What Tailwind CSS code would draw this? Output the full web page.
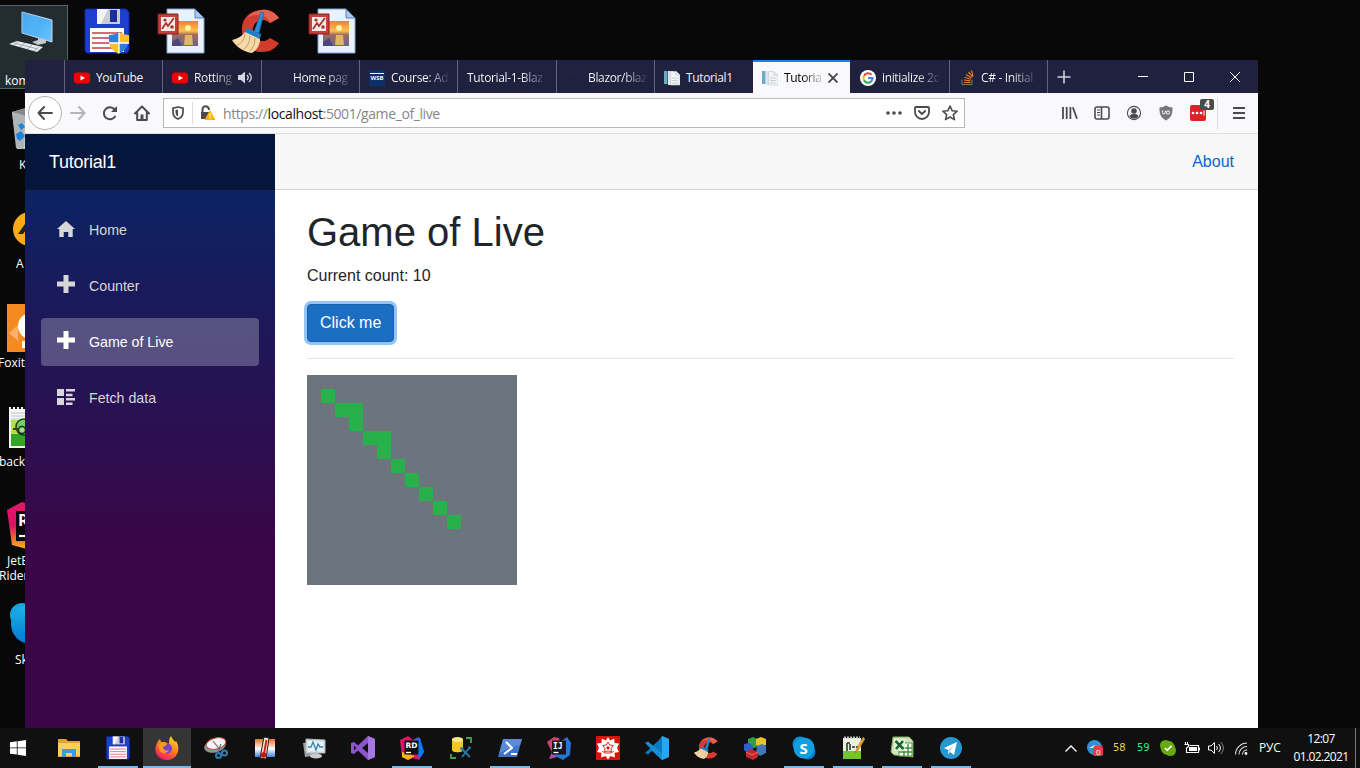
<!DOCTYPE html>
<html lang="en">
<head>
<meta charset="utf-8">
<title>Game of Live</title>
<script src="https://cdn.jsdelivr.net/npm/@tailwindcss/browser@4"></script>
</head>
<body class="relative h-[768px] w-[1360px] overflow-hidden bg-[#080808] font-['Open_Sans','Noto_Sans',sans-serif] text-xs">

<svg class="absolute h-0 w-0">
  <defs>
    <linearGradient id="scr" x1="0" y1="0" x2="1" y2="1"><stop offset="0" stop-color="#2f9df0"/><stop offset="1" stop-color="#6cc4fb"/></linearGradient>
    <linearGradient id="sun" x1="0" y1="0" x2="0" y2="1"><stop offset="0" stop-color="#e8803c"/><stop offset=".4" stop-color="#ffc24f"/><stop offset=".55" stop-color="#a06a60"/><stop offset="1" stop-color="#6a6590"/></linearGradient>
    <linearGradient id="rd" x1="0" y1="0" x2="0" y2="1"><stop offset="0" stop-color="#e0186c"/><stop offset=".5" stop-color="#dd1265"/><stop offset="1" stop-color="#fdb60d"/></linearGradient>
    <linearGradient id="ff" x1=".8" y1="0" x2=".3" y2="1"><stop offset="0" stop-color="#ffe226"/><stop offset=".45" stop-color="#ff8a16"/><stop offset="1" stop-color="#f5156c"/></linearGradient>
    <linearGradient id="sk" x1="0" y1="0" x2="0" y2="1"><stop offset="0" stop-color="#1fb5ea"/><stop offset="1" stop-color="#0078d4"/></linearGradient>
    <linearGradient id="th" x1="0" y1="0" x2="0" y2="1"><stop offset="0" stop-color="#f06a28"/><stop offset=".55" stop-color="#fff"/><stop offset="1" stop-color="#3e7fe0"/></linearGradient>
  </defs>
  <symbol id="floppy" viewBox="0 0 46 46">
    <path d="M2 1h40l3 3v38l-2 3H3l-2-2V2z" fill="#1d3fd0" stroke="#10289a"/>
    <path d="M13 1h23v15H13z" fill="#c9ccd4"/><path d="M13 1h11l-7 15h-4z" fill="#f4f4f6"/><path d="M26 2h7v12h-7z" fill="#1b2f9c"/>
    <path d="M6 20h34v24H6z" fill="#fff"/><path d="M8 25h30M8 30h30M8 35h30M8 40h30" stroke="#c93a48" stroke-width="1.300"/>
  </symbol>
  <symbol id="pptpic" viewBox="0 0 48 46">
    <path d="M10 1h28l9 9v35H10z" fill="#e9f2fc" stroke="#7fa3cf"/><path d="M38 1v9h9z" fill="#a9c8ee" stroke="#5c83b8"/>
    <path d="M15 13h26v25H15z" fill="url(#sun)"/><circle cx="31" cy="20" r="3" fill="#fff0a0"/><path d="M28 27h7l1 10h-9z" fill="#ffd060" opacity=".75"/><path d="M15 34l6-4 4 8H15z" fill="#4a4878"/>
    <path d="M1 6h20v20H1z" fill="#c2413a" stroke="#8c1f1c"/><path d="M4 9h14v14H4z" fill="#f7e9e7"/><path d="M5 21l4-6 2 3 6-8" stroke="#a8322c" stroke-width="1.800" fill="none"/><circle cx="8" cy="12" r="1.600" fill="#a8322c"/><circle cx="15" cy="19" r="1.800" fill="#a8322c"/>
  </symbol>
  <symbol id="cc" viewBox="0 0 48 46">
    <path d="M47 10C42 3 35 1 29 2 16 3 9 12 10 24c1 12 9 20 20 20 8 0 13-3 17-9l-9-5c-6 6-16 3-17-7-1-9 9-15 17-8z" fill="#d23b2e"/>
    <path d="M47 10C42 3 35 1 29 2c-6 1-11 4-14 8 8-5 20-4 23 5z" fill="#e3614f"/>
    <path d="M29 4l3 1-5 20-5-1z" fill="#2b8fd6" stroke="#1565a5" stroke-width=".7"/>
    <path d="M15 20l14 6-1 5-16-6z" fill="#1f7fc8"/>
    <path d="M13 24l15 7c0 6-3 11-8 14-8-1-16-6-20-13 5-1 9-3 13-8z" fill="#f5d9a8"/><path d="M13 26c-1 6-4 10-8 11M18 28c0 6-3 11-6 13M23 30c0 6-2 10-5 13" stroke="#c99a62" fill="none"/>
  </symbol>
  <symbol id="yt" viewBox="0 0 16 12"><rect y=".5" width="16" height="11" rx="3" fill="#f00000"/><path d="M6.500 3.500v5L11 6z" fill="#fff"/></symbol>
  <symbol id="doc" viewBox="0 0 16 16"><path d="M0 1h3.500v13H0z" fill="#6fa9c4"/><path d="M4 1h6v14H4z" fill="#dfe6ea"/><path d="M6.500 1.500h6L16 5v10H6.500z" fill="#f1f3f5" stroke="#c3cbd0" stroke-width=".6"/><path d="M12 1.500V5h4M8 8h6M8 10.500h6M8 13h6" stroke="#c0c9ce" stroke-width=".8" fill="none"/></symbol>
  <symbol id="plus" viewBox="0 0 18 18"><path d="M6.500 0h5v6.500H18v5h-6.500V18h-5v-6.500H0v-5h6.500z" fill="currentColor"/></symbol>
</svg>

<!-- Desktop icons -->
<div class="absolute -left-1 top-[5px] h-[84px] w-[72px] border border-[#56646a] bg-[#232d31]"></div>
<svg class="absolute left-[8px] top-[10px] h-[44px] w-[46px]" viewBox="0 0 46 44"><path d="M14 2l30 8v22L14 23z" fill="url(#scr)" stroke="#c9d8e2"/><path d="M14 2l18 5-6 19-12-3z" fill="#59b5f6" opacity=".5"/><path d="M30 28l8 2v3l-8 2-6-3 6-2z" fill="#c5cacd"/><path d="M9 31l26 6-6 5L1 34z" fill="#e8ecef"/><path d="M6 33l24 6M10 32l-4 3M17 33l-5 4M24 35l-5 4M31 37l-5 4" stroke="#a3abb1"/></svg>
<div class="absolute left-[5px] top-[73px] whitespace-nowrap text-white">kom</div>
<div class="absolute left-[84px] top-[8px] flex gap-7">
  <div class="relative"><svg class="h-[46px] w-[46px]"><use href="#floppy"/></svg>
    <svg class="absolute bottom-0 right-0 h-[22px] w-[22px]" viewBox="0 0 22 22"><path d="M11 0c3 2 6 3 10 3 1 8-2 15-10 19C3 18 0 11 1 3c4 0 7-1 10-3z" fill="#2f7fd8"/><path d="M11 0c3 2 6 3 10 3v8H11zM1 11h10v11C5 19 2 16 1 11z" fill="#f7c02c"/><path d="M11 1v20M1 11h20" stroke="#fff" stroke-width="1.300"/></svg></div>
  <svg class="-ml-px h-[46px] w-[48px]"><use href="#pptpic"/></svg>
  <svg class="-ml-px h-[46px] w-[48px]"><use href="#cc"/></svg>
  <svg class="h-[46px] w-[48px]"><use href="#pptpic"/></svg>
</div>
<svg class="absolute left-[11px] top-[107px] h-[44px] w-[40px]" viewBox="0 0 40 44"><path d="M1 5l14-4 14 4-3 37H6z" fill="#c9ccce"/><path d="M1 5l13 4 15-4-14-4z" fill="#85898c"/><path d="M1 5l13 4-1 33-8-1z" fill="#b0b3b5"/><path d="M7 18l4-2 3 4-4 3zM5 27l5-3 4 5-5 5-3-2z" fill="#1b83dc"/></svg>
<div class="absolute left-[19px] top-[157px] text-white">K</div>
<svg class="absolute left-[13px] top-[212px] h-[34px] w-[34px]" viewBox="0 0 34 34"><circle cx="17" cy="17" r="17" fill="#fbab18"/><path d="M14 9L5 22h5l7-9z" fill="#222"/></svg>
<div class="absolute left-[16px] top-[256px] text-white">A</div>
<svg class="absolute left-[7px] top-[304px] h-[48px] w-[48px]" viewBox="0 0 48 48"><path d="M0 0h48v48H0z" fill="#f58a20"/><path d="M2 29l9-8v16z" fill="#f9b06a"/><circle cx="24" cy="22" r="13" fill="#fff"/><path d="M15 37h8v7h-8z" fill="#fff"/></svg>
<div class="absolute -left-[2px] top-[355px] text-white">Foxit</div>
<svg class="absolute left-[9px] top-[406px] h-[43px] w-[40px]" viewBox="0 0 40 43"><path d="M0 1h40v41H0z" fill="#f6f8f4"/><path d="M2 14h38v26H2z" fill="#b5e04a"/><path d="M2 28h38v12H2z" fill="#35a528"/><path d="M2 7h38M2 10h38M2 13h38" stroke="#b9c7d4"/><path d="M2 2h38" stroke="#111" stroke-width="2" stroke-dasharray="2 2"/><circle cx="15" cy="21" r="8" fill="#71cf65" stroke="#1a4020" stroke-width="1.500"/><path d="M4 23h12" stroke="#4a3a18" stroke-width="2"/><circle cx="13" cy="24" r="3.500" fill="#9be08a" stroke="#183018" stroke-width="1.500"/></svg>
<div class="absolute -left-px top-[454px] text-white">backg</div>
<svg class="absolute left-[7px] top-[501px] h-[48px] w-[48px]" viewBox="0 0 48 48"><path d="M0 9L15 1l30 10-5 30-20 7L5 44z" fill="url(#rd)"/><path d="M9 10h30v30H9z" fill="#050505"/><text x="11" y="25" font-family="Open Sans" font-weight="700" font-size="16" fill="#fff">RD</text><path d="M12 35h12" stroke="#fff" stroke-width="2.200"/></svg>
<div class="absolute left-[7px] top-[553px] text-white">JetBr</div>
<div class="absolute -left-px top-[568px] text-white">Rider</div>
<svg class="absolute left-[10px] top-[603px] h-[44px] w-[44px]" viewBox="0 0 44 44"><circle cx="12" cy="12" r="12" fill="#18a4dd"/><circle cx="21" cy="21" r="20" fill="url(#sk)"/></svg>
<div class="absolute left-[15px] top-[652px] text-white">Sky</div>

<!-- Browser window -->
<main class="absolute left-[25px] top-[60px] flex h-[668px] w-[1233px] flex-col overflow-hidden bg-white">
  <!-- Tabs -->
  <div class="flex h-[33px] shrink-0 bg-[#20203f] text-[12px] tracking-[-0.35px] text-[#f3f3fa]">
    <div class="w-[40px] border-r border-[#62627c]"></div>
    <div class="flex w-[98px] items-center gap-[6px] border-r border-[#62627c] pl-[9px] pt-0.5"><svg class="h-3 w-4"><use href="#yt"/></svg><span>YouTube</span></div>
    <div class="flex w-[99px] items-center border-r border-[#62627c] pl-[9px] pt-0.5"><svg class="h-3 w-4 shrink-0"><use href="#yt"/></svg><span class="ml-[6px] w-[39px] bg-linear-to-r from-white from-55% to-white/20 bg-clip-text text-transparent">Rotting</span>
      <svg class="ml-[5px] h-[13px] w-[14px]" viewBox="0 0 14 13" fill="none" stroke="#d6d6e0" stroke-width="1.300"><path d="M0 4h3l4-3.500v12L3 9H0z" fill="#d6d6e0" stroke="none"/><path d="M9 4c1.500 1.500 1.500 3.500 0 5M11 2c3 3 3 6 0 9"/></svg></div>
    <div class="flex w-[98px] items-center border-r border-[#62627c] pl-[31px] pt-0.5"><span class="whitespace-nowrap bg-linear-to-r from-white from-60% to-white/20 bg-clip-text text-transparent">Home pag</span></div>
    <div class="flex w-[98px] items-center border-r border-[#62627c] pl-[9px] pt-0.5"><div class="flex h-4 w-4 items-center justify-center bg-[#0c2f66]"><span class="border-t border-white text-[6px] font-bold leading-[9px] tracking-normal">WSB</span></div><span class="ml-[6px] whitespace-nowrap bg-linear-to-r from-white from-65% to-white/10 bg-clip-text text-transparent">Course: Ad</span></div>
    <div class="flex w-[99px] items-center border-r border-[#62627c] pl-[9px] pt-0.5"><span class="whitespace-nowrap bg-linear-to-r from-white from-70% to-white/20 bg-clip-text text-transparent">Tutorial-1-Blaz</span></div>
    <div class="flex w-[98px] items-center border-r border-[#62627c] pl-[9px] pt-0.5"><div class="h-[14px] w-[16px] rounded-full border-2 border-[#24243a]"></div><span class="ml-[6px] whitespace-nowrap bg-linear-to-r from-white from-60% to-white/10 bg-clip-text text-transparent">Blazor/blaz</span></div>
    <div class="flex w-[98px] items-center gap-[6px] pl-[9px] pt-0.5"><svg class="h-4 w-4"><use href="#doc"/></svg><span>Tutorial1</span></div>
    <div class="flex w-[97px] items-center border-t-2 border-[#0a84ff] bg-[#f9f9fb] pl-[9px] text-[#111]"><svg class="h-4 w-4 shrink-0"><use href="#doc"/></svg><span class="ml-[6px] w-[37px] whitespace-nowrap bg-linear-to-r from-black from-50% to-black/20 bg-clip-text text-transparent">Tutoria</span><svg class="ml-[7px] h-[10px] w-[10px]" viewBox="0 0 10 10"><path d="M.5.5l9 9m0-9l-9 9" stroke="#444" stroke-width="1.800"/></svg></div>
    <div class="flex w-[100px] items-center border-r border-[#62627c] pl-[10px] pt-0.5"><svg class="h-4 w-4 shrink-0" viewBox="0 0 16 16" fill="none" stroke-width="2.100"><circle cx="8" cy="8" r="8" fill="#fff"/><path d="M11.500 4.800A4.600 4.600 0 0 0 4 5.700" stroke="#ea4335"/><path d="M4 5.700a4.600 4.600 0 0 0 0 4.600" stroke="#fbbc05"/><path d="M4 10.300a4.600 4.600 0 0 0 7 1.300" stroke="#34a853"/><path d="M8 8h4.600c0 1.500-.6 2.700-1.600 3.600" stroke="#4285f4"/></svg><span class="ml-[6px] w-[57px] overflow-hidden whitespace-nowrap bg-linear-to-r from-white from-60% to-white/10 bg-clip-text text-transparent">initialize 2d</span></div>
    <div class="flex w-[98px] items-center border-r border-[#62627c] pl-[11px] pt-0.5"><svg class="h-[15px] w-[13px] shrink-0" viewBox="0 0 13 15" fill="none"><path d="M1 9.500v5h10v-5" stroke="#777"/><path d="M3 12.500h6.500M3 10l6.500.8M3.500 7.200l6.200 2M5 4.500l5.500 3.600M7.500 2l4.200 5M10.500.5l1.500 5.700" stroke="#e87922" stroke-width="1.200"/></svg><span class="ml-[7px] whitespace-nowrap bg-linear-to-r from-white from-60% to-white/20 bg-clip-text text-transparent">C# - Initial</span></div>
    <div class="flex flex-1 items-center pl-[9px] pr-[18px]">
      <svg class="h-[14px] w-[14px]" viewBox="0 0 14 14"><path d="M7 .5v13M.5 7h13" stroke="#cfcfda" stroke-width="1.600"/></svg>
      <div class="ml-auto flex items-center gap-9"><svg class="h-[10px] w-[10px]"><path d="M0 4.500h10" stroke="#fff"/></svg><svg class="h-[10px] w-[10px]"><path d="M.5.5h9v9h-9z" fill="none" stroke="#fff"/></svg><svg class="h-[10px] w-[10px]"><path d="M0 0l10 10M10 0L0 10" stroke="#fff"/></svg></div>
    </div>
  </div>
  <!-- Navigation toolbar -->
  <div class="flex h-[41px] shrink-0 items-center border-b border-[#e0e0e3] bg-[#f9f9fb] text-[#4a4a4f]">
    <div class="ml-[3px] flex h-[34px] w-[34px] items-center justify-center rounded-full border border-[#b4b4b8] bg-white"><svg class="h-[14px] w-4" viewBox="0 0 16 14" fill="none" stroke="currentColor" stroke-width="2" stroke-linecap="round" stroke-linejoin="round"><path d="M15 7H1.500M7 1L1.500 7 7 13"/></svg></div>
    <svg class="ml-[8px] h-[14px] w-4" viewBox="0 0 16 14" fill="none" stroke="#b5b5b8" stroke-width="2" stroke-linecap="round" stroke-linejoin="round"><path d="M1 7h13.500M9 1l5.500 6L9 13"/></svg>
    <svg class="ml-[16px] h-4 w-4" viewBox="0 0 16 16" fill="none" stroke="currentColor" stroke-width="2" stroke-linecap="round"><path d="M13 11.500A6 6 0 1 1 12.500 4.500"/><path d="M15 1v6H9z" fill="currentColor" stroke="none"/></svg>
    <svg class="ml-[16px] h-4 w-4" viewBox="0 0 16 16" fill="none" stroke="currentColor" stroke-width="2" stroke-linejoin="round" stroke-linecap="round"><path d="M1 8.500L8 1.500l7 7M3.200 8v7h9.600V8"/><path d="M6.500 9.500h3V15h-3z" fill="currentColor" stroke="none"/></svg>
    <div class="ml-[13px] flex h-[30px] w-[802px] items-center border border-[#b8b8bb] bg-white">
      <svg class="ml-[8px] h-[14px] w-3" viewBox="0 0 12 14"><path d="M6 1l5 1.200V6c0 3.500-2 5.800-5 7-3-1.200-5-3.500-5-7V2.200z" fill="none" stroke="currentColor" stroke-width="1.700"/><path d="M6 3.500v7C4.300 9.500 3.500 8 3.500 6V4z" fill="currentColor"/></svg>
      <div class="ml-[8px] h-[22px] w-px bg-[#dcdcde]"></div>
      <svg class="ml-[7px] h-4 w-4" viewBox="0 0 16 16"><path d="M2.500 7V4.500a3.200 3.200 0 0 1 6.400 0V5" fill="none" stroke="currentColor" stroke-width="2"/><path d="M1 7h8v7H1z" fill="currentColor"/><path d="M10 5l5.500 10h-11z" fill="#ffb300"/><path d="M10 8.500v3M10 12.300v1.200" stroke="#fff" stroke-width="1.200"/></svg>
      <span class="ml-[7px] mt-0.5 text-[14px] tracking-[-0.4px] text-[#86868a]">https://<span class="text-[#111]">localhost</span>:5001/game_of_live</span>
      <div class="ml-auto mr-[6px] flex items-center gap-3">
        <svg class="h-4 w-4" viewBox="0 0 16 16" fill="currentColor"><circle cx="2" cy="8" r="1.800"/><circle cx="8" cy="8" r="1.800"/><circle cx="14" cy="8" r="1.800"/></svg>
        <svg class="h-4 w-4" viewBox="0 0 16 16" fill="none" stroke="currentColor" stroke-width="1.800" stroke-linecap="round" stroke-linejoin="round"><path d="M2 2h12a1 1 0 0 1 1 1v4a7 7 0 0 1-14 0V3a1 1 0 0 1 1-1zM4.800 6L8 9l3.200-3"/></svg>
        <svg class="h-4 w-4" viewBox="0 0 16 16" fill="none" stroke="currentColor" stroke-width="1.600" stroke-linejoin="round"><path d="M8 1l2.100 4.700 5.100.5-3.900 3.400 1.200 5L8 12l-4.500 2.600 1.200-5L.8 6.200l5.100-.5z"/></svg>
      </div>
    </div>
    <div class="ml-auto flex items-center gap-4 pr-[11px]">
      <svg class="h-4 w-4" viewBox="0 0 16 16" stroke="currentColor" stroke-width="1.800"><path d="M1 2v12M4.700 2v12M8.400 2v12M10.800 2.300L15 13.800"/></svg>
      <svg class="h-4 w-4" viewBox="0 0 16 16" fill="none" stroke="currentColor" stroke-width="1.600"><rect x="1" y="2" width="14" height="12" rx="2"/><path d="M7.500 2v12"/><path d="M3 5h3M3 7.500h3M3 10h3" stroke-width="1"/></svg>
      <svg class="h-4 w-4" viewBox="0 0 16 16"><circle cx="8" cy="8" r="6.600" fill="none" stroke="currentColor" stroke-width="1.100"/><circle cx="8" cy="6" r="2.800" fill="currentColor"/><path d="M3.500 11c1-1.500 2-2 4.500-2s3.500.5 4.500 2c-1 2-2.600 2.600-4.500 2.600S4.500 13 3.500 11z" fill="currentColor"/></svg>
      <svg class="h-4 w-4" viewBox="0 0 16 16"><path d="M8 .5c2 1.300 4 2 6.500 2 .2 6-1 10-6.500 13C2.500 12.500 1.300 8.500 1.500 2.500 4 2.500 6 1.800 8 .5z" fill="#77777a"/><path d="M4.500 5.500v2a1.400 1.400 0 0 0 2.800 0v-2" fill="none" stroke="#fff"/><circle cx="10" cy="7.500" r="1.600" fill="none" stroke="#fff"/></svg>
      <div class="relative h-4 w-4"><svg class="h-4 w-4" viewBox="0 0 16 16"><rect width="16" height="16" rx="2" fill="#d9252a"/><circle cx="3" cy="8" r="1.300" fill="#fff"/><circle cx="7" cy="8" r="1.300" fill="#fff"/><circle cx="11" cy="8" r="1.300" fill="#fff"/><path d="M14 5.500v5" stroke="#fff"/></svg><span class="absolute -top-[6px] left-[10px] h-[11px] w-[14px] rounded-xs bg-[#4a4a4f] text-center text-[10px] font-bold leading-[11px] text-white">4</span></div>
      <div class="-mr-1 ml-[-5px] h-8 w-px bg-[#dedee0]"></div>
      <svg class="ml-px h-4 w-4" viewBox="0 0 16 16" stroke="currentColor" stroke-width="1.800"><path d="M2 3h12M2 8h12M2 13h12"/></svg>
    </div>
  </div>
  <!-- Page -->
  <div class="flex flex-1 font-['Liberation_Sans',Arial,sans-serif] text-[16px] text-[#212529]">
    <aside class="w-[250px] bg-linear-to-b/srgb from-[#052767] from-0% to-[#3a0647] to-70%">
      <div class="flex h-14 items-center bg-black/40 pl-6 text-[18px] text-white"><span class="tracking-[-0.25px]">Tutorial1</span></div>
      <nav class="flex flex-col gap-2 px-4 pt-4 text-[14.2px] text-[#d7d7d7]">
        <a class="flex h-12 items-center gap-[14px] pl-4"><svg class="mb-0.5 h-[18px] w-[18px]" viewBox="0 0 18 18"><path d="M9 1L0 9h2.300v8h4.400v-5h4.600v5h4.400V9H18z" fill="currentColor"/></svg><span>Home</span></a>
        <a class="flex h-12 items-center gap-[14px] pl-4"><svg class="mb-[5px] h-[18px] w-[18px]"><use href="#plus"/></svg><span>Counter</span></a>
        <a class="flex h-12 items-center gap-[14px] rounded bg-white/25 pl-4 text-white"><svg class="mb-[5px] h-[18px] w-[18px]"><use href="#plus"/></svg><span>Game of Live</span></a>
        <a class="flex h-12 items-center gap-[14px] pl-4"><svg class="mb-px h-[17px] w-[18px]" viewBox="0 0 18 17"><path d="M0 0h7v7H0zM0 9h7v7H0zM9 0h9v2.500H9zM9 4.700h6.500v2.500H9zM9 9h9v2.500H9zM9 13.600h6.500v2.400H9z" fill="currentColor"/></svg><span>Fetch data</span></a>
      </nav>
    </aside>
    <section class="flex flex-1 flex-col">
      <header class="flex h-14 items-center justify-end border-b border-[#d6d5d5] bg-[#f7f7f7] pr-6 text-[#0366d6]">About</header>
      <div class="flex flex-col items-start pl-8 pr-6 pt-[18px]">
        <h1 class="h-[48px] text-[40px] leading-[48px]">Game of Live</h1>
        <p class="mt-2 h-6 leading-6">Current count: 10</p>
        <button class="mt-4 h-[38px] rounded-sm border border-[#1861ac] bg-[#1b6ec2] px-3 text-white ring-3 ring-[#93c4f5]">Click me</button>
        <div class="mt-4 h-px w-full bg-[#e3e3e4]"></div>
        <svg class="mt-4 h-[210px] w-[210px] bg-[#6c757d]" viewBox="0 0 210 210" shape-rendering="crispEdges"><path d="M14 14h14v14H14zM28 28h28v28H42V42H28zM56 56h28v28H70V70H56zM84 84h14v14H84zM98 98h14v14H98zM112 112h14v14h-14zM126 126h14v14h-14zM140 140h14v14h-14z" fill="#28b04b"/></svg>
      </div>
    </section>
  </div>
</main>

<!-- Taskbar -->
<footer class="absolute bottom-0 left-0 flex h-10 w-full bg-[#101010] text-white">
  <div class="flex w-[36px] items-center justify-center"><svg class="h-4 w-4" viewBox="0 0 16 16" fill="#fff"><path d="M0 2.300l6.800-1v6.200H0zM7.600 1.200L16 0v7.500H7.600zM0 8.300h6.800v6.300L0 13.700zM7.600 8.300H16V16l-8.400-1.200z"/></svg></div>
  <div class="ml-[8px] grid w-[931px] grid-cols-19 [&>div]:flex [&>div]:items-center [&>div]:justify-center [&_svg]:h-6 [&_svg]:w-6">
    <div><svg viewBox="0 0 24 24"><path d="M1 3h8l2 2h12v16H1z" fill="#e0a42e"/><path d="M1 7h22v13H1z" fill="#f9cf60"/><path d="M5 21v-8h14v8h-4v-4H9v4z" fill="#3f9bdc"/></svg></div>
    <div class="relative"><svg><use href="#floppy"/></svg><i class="absolute bottom-0 h-0.5 w-10 bg-[#76b9ed]"></i></div>
    <div class="relative"><i class="absolute left-px top-0 h-full w-12 border-b-2 border-[#76b9ed] bg-[#353535]"></i><svg class="relative" viewBox="0 0 24 24"><path d="M5 3l1 3 4 0 4 2c0-3 0-6 2-8 1 3 3 4 4 6l1-1c3 5 3 9 1 13-2 4-6 6-10 6C5 24 0 19 .5 13 .7 9 2 6 5 3z" fill="url(#ff)"/><circle cx="12" cy="12.500" r="5" fill="#7542c9"/><path d="M4 8c3-2 6-1 8 0-1 2-3 2-4 3 0 3 3 4 6 3-2 4-7 4-9 1-1-2-2-4-1-7z" fill="#ff9620"/></svg></div>
    <div><svg viewBox="0 0 24 24"><ellipse cx="11" cy="10" rx="11" ry="6.500" fill="#8d9295" transform="rotate(-14 11 10)"/><ellipse cx="12" cy="7.500" rx="10" ry="5.500" fill="#f4f4f4" stroke="#c84a4a" transform="rotate(-14 12 7.500)"/><path d="M9 5l8 10M17 8l-3 8" stroke="#667" stroke-width="1.200"/><g fill="none" stroke="#2d80b0" stroke-width="2"><circle cx="14.500" cy="19.500" r="2.500"/><circle cx="20.500" cy="17" r="2.500"/></g></svg></div>
    <div><svg viewBox="0 0 24 24"><path d="M2 3h20v18H2z" fill="url(#th)"/><path d="M11 1l5 1-3 21-6-1z" fill="#f2e9ce" stroke="#222"/><path d="M13.500 4L11 18" stroke="#d32020" stroke-width="2"/><circle cx="10.500" cy="19" r="2.800" fill="#c41616"/></svg></div>
    <div><svg viewBox="0 0 24 24"><path d="M1 7l14-2 2 14-14 2z" fill="#999fa4"/><path d="M4 3l19 1v13H4z" fill="#dce3e8" stroke="#aeb5b9"/><path d="M6 5l15 1v9H6z" fill="#e4f2f8"/><path d="M6 11h3l2-5 3 8 2-6 2 3h3" fill="none" stroke="#3a83a5" stroke-width="1.300"/><ellipse cx="14" cy="20" rx="6" ry="2.500" fill="#c9ccce"/></svg></div>
    <div><svg viewBox="0 0 24 24"><path d="M17 0l7 3v18l-7 3L7 14.500 3 18l-3-1V7l3-1 4 3.500zM17 7l-6 5 6 5zM3 9.500v5L5.500 12z" fill="#8d55cd" fill-rule="evenodd"/><path d="M17 0l7 3v18l-7 3z" fill="#a677e0"/></svg></div>
    <div class="relative"><svg viewBox="0 0 24 24"><path d="M0 4l8-4 5 4 6-3 2 7 3 8-5 8-6-2-5 2-6-3z" fill="#dd1265"/><path d="M14 3l6-1 4 14-5 7z" fill="#087cfa"/><path d="M2 16l13 4-7 4-6-3z" fill="#fdb60d"/><path d="M4.500 4.500h14v14h-14z" fill="#111"/><text x="5.500" y="12" font-family="DejaVu Sans" font-weight="700" font-size="7.500" fill="#fff">RD</text><path d="M6 16.500h5" stroke="#fff" stroke-width="1.300"/></svg><i class="absolute bottom-0 h-0.5 w-10 bg-[#76b9ed]"></i></div>
    <div><svg viewBox="0 0 24 24"><path d="M3 3v11c0 3 11 3 11 0V3z" fill="#f2c62b"/><ellipse cx="8.500" cy="3.500" rx="5.500" ry="2.500" fill="#ffe97b"/><path d="M17 2h5v5M2 18v4h5" stroke="#3da452" stroke-width="1.800" fill="none"/><path d="M12 12l9 9M21 11l-8 10" stroke="#2877ad" stroke-width="1.800"/><path d="M11 11l4 1-3 3zM19 10l3 1-1 3" fill="#2877ad"/></svg></div>
    <div class="relative"><svg viewBox="0 0 24 24"><path d="M5 3h19l-5 18H0z" fill="#3f72ca"/><path d="M5 3h19l-2 6C14 11 8 13 1 18z" fill="#6994dc" opacity=".7"/><path d="M8 6l6 6-8 6M13 18h6" stroke="#fff" stroke-width="2" fill="none"/></svg><i class="absolute bottom-0 h-0.5 w-10 bg-[#76b9ed]"></i></div>
    <div><svg viewBox="0 0 24 24"><path d="M0 6l7-5 5 1 2 9-4 10-8 2 3-7z" fill="#d54376"/><path d="M14 5l6-4 4 6-1 12-7 5-8-4z" fill="#2774d2"/><path d="M2 23l6-8v6z" fill="#9b55b5"/><path d="M5 4.500h14v14H5z" fill="#16161a"/><text x="6" y="12.500" font-family="DejaVu Sans Mono" font-weight="700" font-size="8" fill="#fff">IJ</text><path d="M6.500 16.500h5" stroke="#fff" stroke-width="1.300"/></svg></div>
    <div><svg viewBox="0 0 24 24"><path d="M0 0h24v24H0z" fill="#d91408"/><path d="M12 1l2.200 3.500 4-2 .3 4.500 4.500.5-2 4.500 2 4-4.500.8.500 4.700-4.500-1.500L12 23.500 9.500 20 5 21.500l.5-4.700L1 16l2-4-2-4.500L5.500 7l.3-4.500 4 2z" fill="#fff"/><path d="M12 6l1.700 3 3.500.5-2.200 3 .5 3.700-3.500-1.400-3.500 1.400.5-3.700-2.200-3 3.500-.5zM6.500 15l2 2h7l2-2" fill="none" stroke="#d91408" stroke-width=".9"/><circle cx="12" cy="11.800" r="1.600" fill="#d91408"/></svg></div>
    <div><svg viewBox="0 0 24 24"><path d="M17 0l7 3v18l-7 3L7 15l-4 3.500L0 17l14-13z" fill="#0b79bd"/><path d="M3 5.500L0 7l17 17V17z" fill="#168ed5"/><path d="M17 0l7 3v18l-7 3z" fill="#2aa6ee"/></svg></div>
    <div><svg><use href="#cc"/></svg></div>
    <div><svg viewBox="0 0 24 24"><path d="M5 3l5-2 4 2v8l-6 2-3-2z" fill="#369d46"/><path d="M13 3l5-2 5 2v6l-5 2-5-2z" fill="#e8c42e"/><path d="M1 8l5-1 4 3v6l-5 1-4-3z" fill="#2e5fd0"/><path d="M14 10l5-2 4 2v7l-6 3-4-3z" fill="#3f78bb"/><path d="M3 16l5-3 7 3v5l-5 3-7-3z" fill="#c4262a"/><path d="M3 16l6 3 6-3" stroke="#ef6a61" fill="none"/></svg></div>
    <div class="relative"><svg viewBox="0 0 24 24"><circle cx="8" cy="8" r="7.500" fill="#0e8cd0"/><circle cx="16" cy="16" r="7.500" fill="#087ac5"/><circle cx="12" cy="12" r="10.500" fill="#129fe0"/><text x="7.500" y="17.500" font-family="Open Sans" font-weight="700" font-size="15" fill="#fff">S</text></svg><i class="absolute bottom-0 h-0.5 w-10 bg-[#76b9ed]"></i></div>
    <div class="relative"><svg viewBox="0 0 24 24"><path d="M2 2h18v21H2z" fill="#edf2df"/><path d="M2 15h18v8H2z" fill="#71c629"/><path d="M3 1.500h16" stroke="#bbb" stroke-width="2" stroke-dasharray="2 1"/><path d="M6 7v8M6 7h3M9 8v6M11 11h3M15 11h3" stroke="#243024" stroke-width="1.500"/><path d="M22 1l2 2-8 13-2 1 1-3z" fill="#e4a52e" stroke="#a36418" stroke-width=".5"/></svg><i class="absolute bottom-0 h-0.5 w-10 bg-[#76b9ed]"></i></div>
    <div class="relative"><svg viewBox="0 0 24 24"><path d="M3 1h16l4 4v16L4 19l-3-3z" fill="#cfe4bb" stroke="#7ca55a"/><path d="M9 7h13v13H9z" fill="#fff" stroke="#4b9a43"/><path d="M9 12h13M9 16h13M14 8v12M18 8v12" stroke="#429438" stroke-width="1.500"/><path d="M4 3h11v12H4z" fill="#e4f0d8"/><path d="M5.500 5l8 8M13 5l-7 8" stroke="#17652a" stroke-width="2.500"/></svg><i class="absolute bottom-0 h-0.5 w-10 bg-[#76b9ed]"></i></div>
    <div class="relative"><svg viewBox="0 0 24 24"><circle cx="12" cy="12" r="11" fill="#2797d2"/><path d="M5 12l13-6-3 13-4-3-2 2v-4z" fill="#fff"/><path d="M9 14l6-5-4 7-2 2z" fill="#c4def0"/></svg><i class="absolute bottom-0 h-0.5 w-10 bg-[#76b9ed]"></i></div>
  </div>
  <div class="ml-auto flex items-center">
    <svg class="h-[7px] w-3" viewBox="0 0 12 7"><path d="M.5 6.500L6 1l5.500 5.500" fill="none" stroke="#fff" stroke-width="1.300"/></svg>
    <svg class="ml-[10px] h-4 w-4" viewBox="0 0 16 16"><circle cx="7.500" cy="7.500" r="7.500" fill="#2e95d3"/><path d="M2 8l6-3v3z" fill="#fff"/><rect x="6" y="6" width="10" height="10" rx="2" fill="#e93c43"/><text x="9" y="14.500" font-family="Open Sans" font-size="8" fill="#fff">0</text></svg>
    <span class="ml-[10px] w-[14px] font-['DejaVu_Sans'] text-[10px] text-[#e6d247]">58</span>
    <span class="ml-[10px] w-[14px] font-['DejaVu_Sans'] text-[10px] text-[#35e68a]">59</span>
    <svg class="ml-[9px] h-4 w-4" viewBox="0 0 16 16"><circle cx="5.500" cy="5.500" r="5.500" fill="#67a90f"/><circle cx="10.500" cy="10.500" r="5.500" fill="#67a90f"/><circle cx="8" cy="8" r="7.200" fill="#67a90f"/><path d="M5 8l2.200 2.300L11.500 6" fill="none" stroke="#fff" stroke-width="1.800"/></svg>
    <svg class="ml-[8px] h-[12px] w-4" viewBox="0 0 16 12" fill="none" stroke="#fff"><path d="M1.500 0v2M3.500 0v2M.5 2.500h4v2l-2 1.500v4.500h12v-7H5.500" stroke-width="1.100"/><path d="M5 5h8v4H5z" fill="#fff" stroke="none"/><path d="M15.500 5.500v3"/></svg>
    <svg class="ml-[8px] h-[14px] w-4" viewBox="0 0 16 14" fill="none" stroke="#fff"><path d="M.5 5h2.500l3.500-3.500v11L3 9H.5zM8.500 5c1 1 1 3 0 4M10.500 3c2.500 2.500 2.500 5.500 0 8"/><path d="M12.500 1c3.800 3.500 3.800 8.500 0 12" stroke="#888"/></svg>
    <svg class="ml-[10px] h-[14px] w-[14px]" viewBox="0 0 14 14" fill="none" stroke="#ddd" stroke-width="1.100"><path d="M1.500 13.500C1.500 7 7 2 13 2M5 13.500C5 9 8.500 5.500 13 5.500M8.500 13.500C8.500 11 10.500 9 13 9"/><circle cx="12" cy="12.500" r="1.400" fill="#fff" stroke="none"/></svg>
    <span class="ml-[11px] w-[23px] text-[12px] tracking-[-0.2px]">РУС</span>
    <div class="ml-[9px] w-[60px] text-center text-[12px] leading-[18px] tracking-[-0.6px]"><div>12:07</div><div>01.02.2021</div></div>
    <div class="ml-[4px] h-full w-px bg-[#777]"></div><div class="w-[4px]"></div>
  </div>
</footer>
</body>
</html>
